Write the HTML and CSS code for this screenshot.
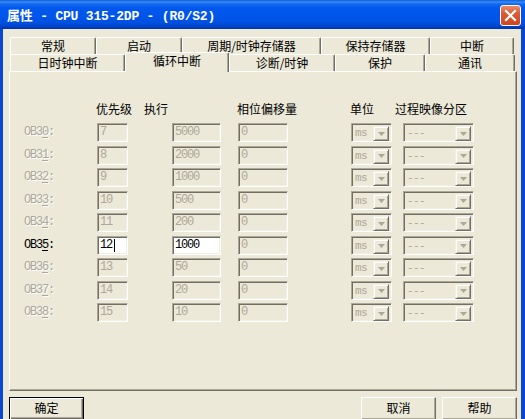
FILE: index.html
```html
<!DOCTYPE html>
<html lang="zh">
<head>
<meta charset="utf-8">
<title>属性</title>
<link rel="stylesheet" href="styles.css">
</head>
<body>
<div class="window">
  <div class="titlebar">
    <span class="title">属性 - CPU 315-2DP - (R0/S2)</span>
    <span class="close"><svg width="19" height="19" viewBox="0 0 19 19"><path d="M5 5 L14 14 M14 5 L5 14" stroke="#fff" stroke-width="2.2" stroke-linecap="square"/></svg></span>
  </div>
  <div class="frame">
    <div class="tabrow back">
      <div class="tab">常规</div>
      <div class="tab">启动</div>
      <div class="tab">周期/时钟存储器</div>
      <div class="tab">保持存储器</div>
      <div class="tab">中断</div>
    </div>
    <div class="tabrow front">
      <div class="tab">日时钟中断</div>
      <div class="tab sel">循环中断</div>
      <div class="tab">诊断/时钟</div>
      <div class="tab">保护</div>
      <div class="tab">通讯</div>
    </div>
    <div class="panel">
      <div class="hdr">
        <span></span><span>优先级</span><span>执行</span><span>相位偏移量</span><span>单位</span><span>过程映像分区</span>
      </div>
      <div class="rows">
        <span class="lbl dis">OB3<u>0</u>:</span><span class="edit pri">7</span><span class="edit exe">5000</span><span class="edit pha">0</span>
        <span class="combo unit"><span class="val">ms</span><span class="btn"><svg width="7" height="4" viewBox="0 0 7 4"><path d="M0 0H7L3.5 4Z" fill="#ACA899"/></svg></span></span>
        <span class="combo part"><span class="val">---</span><span class="btn"><svg width="7" height="4" viewBox="0 0 7 4"><path d="M0 0H7L3.5 4Z" fill="#ACA899"/></svg></span></span>

        <span class="lbl dis">OB3<u>1</u>:</span><span class="edit pri">8</span><span class="edit exe">2000</span><span class="edit pha">0</span>
        <span class="combo unit"><span class="val">ms</span><span class="btn"><svg width="7" height="4" viewBox="0 0 7 4"><path d="M0 0H7L3.5 4Z" fill="#ACA899"/></svg></span></span>
        <span class="combo part"><span class="val">---</span><span class="btn"><svg width="7" height="4" viewBox="0 0 7 4"><path d="M0 0H7L3.5 4Z" fill="#ACA899"/></svg></span></span>

        <span class="lbl dis">OB3<u>2</u>:</span><span class="edit pri">9</span><span class="edit exe">1000</span><span class="edit pha">0</span>
        <span class="combo unit"><span class="val">ms</span><span class="btn"><svg width="7" height="4" viewBox="0 0 7 4"><path d="M0 0H7L3.5 4Z" fill="#ACA899"/></svg></span></span>
        <span class="combo part"><span class="val">---</span><span class="btn"><svg width="7" height="4" viewBox="0 0 7 4"><path d="M0 0H7L3.5 4Z" fill="#ACA899"/></svg></span></span>

        <span class="lbl dis">OB3<u>3</u>:</span><span class="edit pri">10</span><span class="edit exe">500</span><span class="edit pha">0</span>
        <span class="combo unit"><span class="val">ms</span><span class="btn"><svg width="7" height="4" viewBox="0 0 7 4"><path d="M0 0H7L3.5 4Z" fill="#ACA899"/></svg></span></span>
        <span class="combo part"><span class="val">---</span><span class="btn"><svg width="7" height="4" viewBox="0 0 7 4"><path d="M0 0H7L3.5 4Z" fill="#ACA899"/></svg></span></span>

        <span class="lbl dis">OB3<u>4</u>:</span><span class="edit pri">11</span><span class="edit exe">200</span><span class="edit pha">0</span>
        <span class="combo unit"><span class="val">ms</span><span class="btn"><svg width="7" height="4" viewBox="0 0 7 4"><path d="M0 0H7L3.5 4Z" fill="#ACA899"/></svg></span></span>
        <span class="combo part"><span class="val">---</span><span class="btn"><svg width="7" height="4" viewBox="0 0 7 4"><path d="M0 0H7L3.5 4Z" fill="#ACA899"/></svg></span></span>

        <span class="lbl">OB3<u>5</u>:</span><span class="edit pri on">12<span class="caret"></span></span><span class="edit exe on">1000</span><span class="edit pha">0</span>
        <span class="combo unit"><span class="val">ms</span><span class="btn"><svg width="7" height="4" viewBox="0 0 7 4"><path d="M0 0H7L3.5 4Z" fill="#ACA899"/></svg></span></span>
        <span class="combo part"><span class="val">---</span><span class="btn"><svg width="7" height="4" viewBox="0 0 7 4"><path d="M0 0H7L3.5 4Z" fill="#ACA899"/></svg></span></span>

        <span class="lbl dis">OB3<u>6</u>:</span><span class="edit pri">13</span><span class="edit exe">50</span><span class="edit pha">0</span>
        <span class="combo unit"><span class="val">ms</span><span class="btn"><svg width="7" height="4" viewBox="0 0 7 4"><path d="M0 0H7L3.5 4Z" fill="#ACA899"/></svg></span></span>
        <span class="combo part"><span class="val">---</span><span class="btn"><svg width="7" height="4" viewBox="0 0 7 4"><path d="M0 0H7L3.5 4Z" fill="#ACA899"/></svg></span></span>

        <span class="lbl dis">OB3<u>7</u>:</span><span class="edit pri">14</span><span class="edit exe">20</span><span class="edit pha">0</span>
        <span class="combo unit"><span class="val">ms</span><span class="btn"><svg width="7" height="4" viewBox="0 0 7 4"><path d="M0 0H7L3.5 4Z" fill="#ACA899"/></svg></span></span>
        <span class="combo part"><span class="val">---</span><span class="btn"><svg width="7" height="4" viewBox="0 0 7 4"><path d="M0 0H7L3.5 4Z" fill="#ACA899"/></svg></span></span>

        <span class="lbl dis">OB3<u>8</u>:</span><span class="edit pri">15</span><span class="edit exe">10</span><span class="edit pha">0</span>
        <span class="combo unit"><span class="val">ms</span><span class="btn"><svg width="7" height="4" viewBox="0 0 7 4"><path d="M0 0H7L3.5 4Z" fill="#ACA899"/></svg></span></span>
        <span class="combo part"><span class="val">---</span><span class="btn"><svg width="7" height="4" viewBox="0 0 7 4"><path d="M0 0H7L3.5 4Z" fill="#ACA899"/></svg></span></span>
      </div>
    </div>
    <div class="btns">
      <span class="button def">确定</span>
      <span class="spacer"></span>
      <span class="button">取消</span>
      <span class="button">帮助</span>
    </div>
  </div>
</div>
</body>
</html>
```
FILE: styles.css
```css
* { box-sizing: border-box; margin: 0; padding: 0; }
html, body { width: 525px; height: 419px; overflow: hidden; }
body {
  font-family: "Noto Sans CJK SC", "Liberation Sans", sans-serif;
  font-size: 12px;
  color: #000;
  background: #ECE9D8;
}
.window { display: flex; flex-direction: column; height: 419px; }
.titlebar {
  height: 29px;
  flex: none;
  display: flex;
  align-items: center;
  padding: 0 4px 0 7px;
  background: linear-gradient(to bottom, #0A5BDC 0px, #3A8CF5 2px, #1468EE 4px, #0058EE 8px, #0055EA 16px, #0052E2 22px, #0046CE 26px, #0033B0 29px);
}
.title {
  font-family: "Liberation Mono", "Noto Sans CJK SC", monospace;
  font-weight: bold;
  font-size: 13px;
  color: #fff;
  letter-spacing: -0.2px;
  white-space: pre;
}
.close {
  margin-left: auto;
  width: 21px;
  height: 21px;
  border: 1px solid #fff;
  border-radius: 3px;
  background: linear-gradient(to bottom, #E98A6A 0%, #DC5A33 40%, #CF4520 100%);
  display: flex;
  align-items: center;
  justify-content: center;
  margin-top: 1px;
}
.frame {
  flex: 1;
  display: flex;
  flex-direction: column;
  border-left: 3px solid #0A47D4;
  border-right: 4px solid #0A47D4;
  padding: 8px 4px 0 6px;
  background: #ECE9D8;
}
.tabrow { display: grid; height: 17px; margin-left: 1px; }
.tabrow.back { grid-template-columns: 86px 86px 139px 109px 84px; }
.tabrow.front { grid-template-columns: 115px 104px 106px 90px 90px; }
.tab {
  height: 17px;
  border-top: 1px solid #fff;
  border-left: 1px solid #fff;
  border-right: 1px solid #716F64;
  box-shadow: inset -1px 0 #ACA899;
  border-radius: 2px 2px 0 0;
  text-align: center;
  line-height: 15px;
  background: #ECE9D8;
  white-space: nowrap;
}
.tab.sel {
  position: relative;
  z-index: 1;
  height: 20px;
  margin-top: -2px;
  line-height: 16px;
}
.panel {
  height: 320px;
  flex: none;
  border: 1px solid;
  border-color: #fff #716F64 #716F64 #fff;
  box-shadow: inset -1px -1px #ACA899;
  padding: 29px 0 0 14px;
}
.hdr {
  display: grid;
  grid-template-columns: 72px 48px 93px 113px 45px auto;
  line-height: 16px;
  height: 16px;
}
.rows {
  margin-top: 6px;
  display: grid;
  grid-template-columns: 73px 75px 66px 113px 52px 71px;
  grid-auto-rows: 22.5px;
  align-items: start;
}
.lbl {
  font-family: "Liberation Mono", monospace;
  font-size: 12px;
  letter-spacing: -1.2px;
  line-height: 19px;
  height: 19px;
}
.lbl u { text-decoration-thickness: 1px; text-underline-offset: 2px; }
.dis { color: #ACA899; text-shadow: 1px 1px 0 #fff; }
.edit {
  justify-self: start;
  height: 19px;
  border: 1px solid;
  border-color: #ACA899 #fff #fff #ACA899;
  box-shadow: inset 1px 1px #716F64, inset -1px -1px #F1EFE2;
  padding-left: 2px;
  font-family: "Liberation Mono", monospace;
  font-size: 12px;
  letter-spacing: -1.2px;
  line-height: 17px;
  color: #ACA899;
  background: #ECE9D8;
  display: flex;
  align-items: center;
}
.edit.on { background: #fff; color: #000; }
.caret { display: inline-block; width: 1px; height: 13px; background: #000; margin-left: 2px; }
.pri { width: 31px; }
.exe { width: 49px; }
.pha { width: 50px; }
.combo {
  justify-self: start;
  height: 19px;
  display: flex;
  border: 1px solid;
  border-color: #ACA899 #fff #fff #ACA899;
  box-shadow: inset 1px 1px #716F64, inset -1px -1px #F1EFE2;
  padding: 2px;
  background: #ECE9D8;
}
.unit { width: 41px; }
.part { width: 71px; }
.val {
  flex: 1;
  font-family: "Liberation Mono", monospace;
  font-size: 11px;
  letter-spacing: -0.6px;
  color: #ACA899;
  line-height: 15px;
  padding-left: 1px;
}
.btn {
  width: 16px;
  height: 15px;
  border: 1px solid;
  border-color: #F1EFE2 #716F64 #716F64 #F1EFE2;
  box-shadow: inset 1px 1px #fff, inset -1px -1px #ACA899;
  display: flex;
  align-items: center;
  justify-content: center;
}
.btns { display: flex; margin-top: 6px; }
.spacer { flex: 1; }
.button {
  width: 75px;
  height: 23px;
  border: 1px solid;
  border-color: #fff #716F64 #716F64 #fff;
  box-shadow: inset -1px -1px #ACA899;
  text-align: center;
  line-height: 20px;
  flex: none;
}
.button + .button { margin-left: 6px; }
.button.def {
  border: 1px solid #000;
  box-shadow: inset 1px 1px #fff, inset -1px -1px #716F64, inset -2px -2px #ACA899;
}
```
